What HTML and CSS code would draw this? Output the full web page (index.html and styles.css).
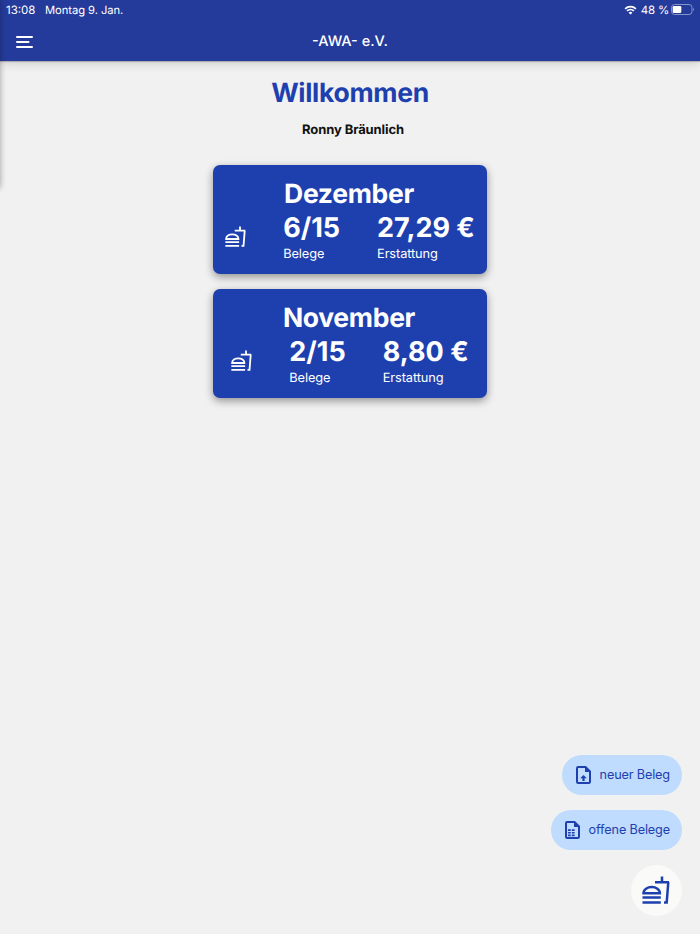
FILE: index.html
```html
<!DOCTYPE html>
<html lang="de">
<head>
    <meta charset="UTF-8">
    <title>-AWA- e.V.</title>
    <link rel="stylesheet" href="styles.css">
</head>
<body>
<svg class="sprite">
    <symbol id="fastfood" viewBox="0 0 28 28">
        <path d="M20 .5V6M13 6.2h14M26.3 6.2l-1.6 20.3H22M.5 21.6h18.3M.5 26.5h18.3M1.5 17.3c0-4 4-6.2 8.2-6.2s8.2 2.2 8.2 6.2z"/>
    </symbol>
</svg>
<div class="drawer-edge"></div>
<header class="header">
    <div class="status">
        <span class="status__time">13:08</span>
        <span class="status__date">Montag 9. Jan.</span>
        <svg class="status__wifi" viewBox="0 0 13 10">
            <path d="M1.1 3.8a7.7 7.7 0 0 1 10.8 0M3.1 5.9a4.9 4.9 0 0 1 6.8 0"/>
            <path class="status__wifi-dot" d="M6.5 9.6L4.6 7.7a2.8 2.8 0 0 1 3.8 0z"/>
        </svg>
        <span class="status__percent">48 %</span>
        <svg class="status__battery" viewBox="0 0 24 11">
            <rect class="status__battery-frame" x=".5" y=".5" width="20.5" height="10" rx="3"/>
            <rect x="1.7" y="2" width="8.6" height="7" rx="1.3"/>
            <path class="status__battery-cap" d="M22.3 3.8c1.2.4 1.2 3 0 3.4z"/>
        </svg>
    </div>
    <div class="navbar">
        <svg class="navbar__menu" viewBox="0 0 17 12">
            <path d="M1 1h15M1 6h11.500M1 11h15"/>
        </svg>
        <div class="navbar__title">-AWA- e.V.</div>
    </div>
</header>
<main class="content">
    <h1 class="content__heading">Willkommen</h1>
    <p class="content__user">Ronny Bräunlich</p>
    <section class="card">
        <h2 class="card__month">Dezember</h2>
        <div class="card__row">
            <svg class="card__icon"><use href="#fastfood"/></svg>
            <div class="card__stat">
                <div class="card__value">6/15</div>
                <div class="card__label">Belege</div>
            </div>
            <div class="card__stat">
                <div class="card__value">27,29 €</div>
                <div class="card__label">Erstattung</div>
            </div>
        </div>
    </section>
    <section class="card">
        <h2 class="card__month">November</h2>
        <div class="card__row">
            <svg class="card__icon"><use href="#fastfood"/></svg>
            <div class="card__stat">
                <div class="card__value">2/15</div>
                <div class="card__label">Belege</div>
            </div>
            <div class="card__stat">
                <div class="card__value">8,80 €</div>
                <div class="card__label">Erstattung</div>
            </div>
        </div>
    </section>
</main>
<div class="actions">
    <button class="action-button">
        <svg class="action-button__icon" viewBox="0 0 15 18">
            <path class="outline" d="M9.500 1H2.200Q1 1 1 2.200v13.600Q1 17 2.200 17h10.600q1.200 0 1.200-1.200V5.500z"/>
            <path d="M9 0l6 6H9zM7.500 9l3.300 3.300H8.600V15H6.400v-2.700H4.200z"/>
        </svg>
        <span>neuer Beleg</span>
    </button>
    <button class="action-button">
        <svg class="action-button__icon" viewBox="0 0 15 18">
            <path class="outline" d="M9.500 1H2.200Q1 1 1 2.200v13.600Q1 17 2.200 17h10.600q1.200 0 1.200-1.200V5.500z"/>
            <path d="M9 0l6 6H9zM3 8.200h2.800v1.700H3zM6.800 8.200h2.800v1.700H6.800zM3 10.900h2.800v1.700H3zM6.800 10.900h2.800v1.700H6.800zM3 13.600h2.800v1.700H3zM6.800 13.600h2.800v1.700H6.800z"/>
        </svg>
        <span>offene Belege</span>
    </button>
    <button class="round-button">
        <svg class="round-button__icon"><use href="#fastfood"/></svg>
    </button>
</div>
</body>
</html>
```
FILE: styles.css
```css
* {
    box-sizing: border-box;
}
html, body {
    margin: 0;
    padding: 0;
    height: 100%;
}
body {
    display: flex;
    flex-direction: column;
    overflow: hidden;
    background-color: #f1f1f1;
    font-family: Inter, "Liberation Sans", sans-serif;
    font-size: 13px;
    text-rendering: geometricPrecision;
}
svg {
    display: block;
    flex: none;
}
h1, h2, p {
    margin: 0;
}
.sprite {
    position: absolute;
    width: 0;
    height: 0;
}
/* shadow of the closed side menu */
.drawer-edge {
    position: absolute;
    z-index: 2;
    top: 0;
    left: -10px;
    width: 10px;
    height: 188px;
    box-shadow: 0 0 6px rgba(0, 0, 0, .35);
}
.header {
    flex: none;
    height: 61px;
    background-color: #253b9b;
    box-shadow: 0 1px 1px rgba(0, 0, 0, .2), 0 2px 10px rgba(0, 0, 0, .16);
    color: #fff;
}
.status {
    display: flex;
    align-items: center;
    height: 19px;
    padding: 0 5px 0 6px;
    font-size: 11.5px;
}
.status__time {
    width: 39px;
}
.status__date {
    flex: 1;
    font-size: 11.2px;
    letter-spacing: -.05px;
}
.status__wifi {
    width: 13px;
    height: 10px;
    margin-right: 4px;
    fill: none;
    stroke: #fff;
    stroke-width: 1.7;
}
.status__wifi-dot {
    fill: #fff;
    stroke: none;
}
.status__percent {
    letter-spacing: -.2px;
}
.status__battery {
    width: 24px;
    height: 11px;
    margin-left: 2px;
    fill: #fff;
}
.status__battery-frame {
    fill: none;
    stroke: #8794c8;
}
.status__battery-cap {
    fill: #8794c8;
}
.navbar {
    display: grid;
    grid-template-columns: 1fr auto 1fr;
    align-items: center;
    height: 45px;
    padding: 0 15.5px;
}
.navbar__menu {
    width: 17px;
    height: 12px;
    fill: none;
    stroke: #fff;
    stroke-width: 2;
    stroke-linecap: round;
}
.navbar__title {
    font-size: 14.5px;
    font-weight: 500;
}
.content {
    flex: 1;
    display: flex;
    flex-direction: column;
    align-items: center;
    padding-top: 15px;
}
.content__heading {
    color: #1e40af;
    font-size: 26.5px;
    line-height: 34px;
    font-weight: 700;
    letter-spacing: -.3px;
}
.content__user {
    margin: 10px 0 25px;
    padding-left: 6px;
    color: #111;
    line-height: 20px;
    font-weight: 700;
    letter-spacing: -.1px;
}
.card {
    width: 274px;
    height: 109px;
    margin-bottom: 15px;
    padding-top: 12px;
    border-radius: 7px;
    background-color: #1e40af;
    box-shadow: 0 3px 8px rgba(0, 0, 0, .4);
    color: #fff;
}
.card__month {
    padding-right: 2px;
    font-size: 26.5px;
    line-height: 34px;
    font-weight: 700;
    letter-spacing: -.3px;
    text-align: center;
}
.card__row {
    display: flex;
    align-items: center;
    justify-content: center;
    gap: 37px;
}
.card__icon {
    width: 21px;
    height: 21px;
    margin-bottom: 2px;
    fill: none;
    stroke: #fff;
    stroke-width: 2.4;
}
.card__value {
    font-size: 27px;
    line-height: 34px;
    font-weight: 700;
    white-space: nowrap;
}
.card__label {
    font-size: 12.8px;
    line-height: 19px;
    letter-spacing: -.1px;
}
.actions {
    position: absolute;
    right: 18.5px;
    bottom: 18.5px;
    display: flex;
    flex-direction: column;
    align-items: flex-end;
    gap: 15px;
}
.action-button {
    display: flex;
    align-items: center;
    gap: 9px;
    height: 40px;
    padding: 0 11.5px 0 14px;
    border: none;
    border-radius: 20px;
    background-color: #bfdbfe;
    color: #1e40af;
    font-family: inherit;
    font-size: 12.7px;
    letter-spacing: -.15px;
}
.action-button__icon {
    width: 15px;
    height: 18px;
    fill: #1e40af;
}
.outline {
    fill: none;
    stroke: #1e40af;
    stroke-width: 2;
}
.round-button {
    display: flex;
    align-items: center;
    justify-content: center;
    width: 51px;
    height: 51px;
    padding: 0 1px 1px 0;
    border: none;
    border-radius: 50%;
    background-color: #fafaf9;
}
.round-button__icon {
    width: 28px;
    height: 28px;
    fill: none;
    stroke: #1e40af;
    stroke-width: 2.5;
}
```
